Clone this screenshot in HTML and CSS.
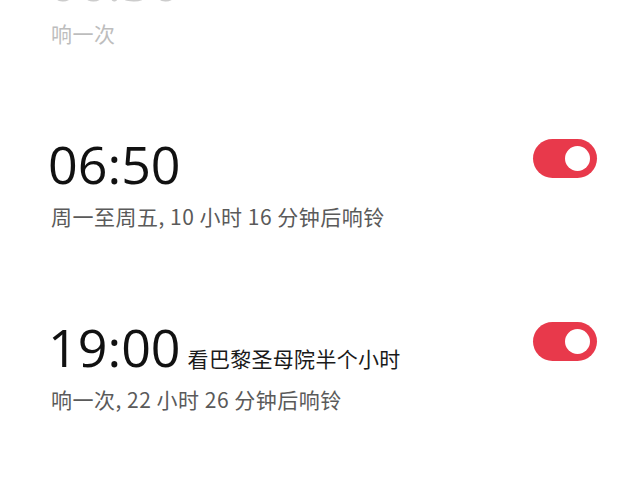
FILE: index.html
```html
<!DOCTYPE html>
<html lang="zh-CN">
<head>
<meta charset="utf-8">
<link rel="stylesheet" href="styles.css">
</head>
<body>
<div class="list">
  <div class="alarm past">
    <div class="info">
      <div class="time">06:30</div>
      <div class="sub">响一次</div>
    </div>
    <div class="toggle off"><span class="knob"></span></div>
  </div>
  <div class="alarm">
    <div class="info">
      <div class="time">06:50</div>
      <div class="sub">周一至周五, 10 小时 16 分钟后响铃</div>
    </div>
    <div class="toggle"><span class="knob"></span></div>
  </div>
  <div class="alarm">
    <div class="info">
      <div class="time">19:00<span class="label">看巴黎圣母院半个小时</span></div>
      <div class="sub">响一次, 22 小时 26 分钟后响铃</div>
    </div>
    <div class="toggle"><span class="knob"></span></div>
  </div>
</div>
</body>
</html>
```
FILE: styles.css
```css
html, body {
  margin: 0;
  padding: 0;
  background: #ffffff;
  overflow: hidden;
}
body {
  width: 640px;
  height: 503px;
}
.list {
  margin-top: -45px;
  padding: 0 43px 0 48px;
}
.alarm {
  display: flex;
  justify-content: space-between;
  align-items: flex-start;
  height: 183px;
}
.info {
  display: flex;
  flex-direction: column;
  gap: 16px;
}
.time {
  font-family: "Open Sans", "Noto Sans CJK SC", sans-serif;
  font-weight: 400;
  font-size: 52px;
  line-height: 52px;
  color: #111111;
  white-space: nowrap;
}
.label {
  font-family: "Noto Sans CJK SC", sans-serif;
  font-size: 21px;
  line-height: 21px;
  letter-spacing: 0.3px;
  color: #1a1a1a;
  margin-left: 7px;
}
.sub {
  font-family: "Noto Sans CJK SC", sans-serif;
  font-size: 21px;
  line-height: 21px;
  letter-spacing: 0.5px;
  color: #5a5a5a;
  margin-left: 3px;
  white-space: nowrap;
}
.past .time {
  color: #cccccc;
}
.past .sub {
  color: #bdbdbd;
}
.toggle {
  margin-top: 1px;
  width: 64px;
  height: 39px;
  border-radius: 20px;
  background: #e8394b;
  display: flex;
  align-items: center;
  justify-content: flex-end;
  padding-right: 7px;
  box-sizing: border-box;
  flex-shrink: 0;
}
.toggle.off {
  background: #dddddd;
  justify-content: flex-start;
  padding-left: 7px;
}
.knob {
  width: 25px;
  height: 25px;
  border-radius: 50%;
  background: #ffffff;
}
```
